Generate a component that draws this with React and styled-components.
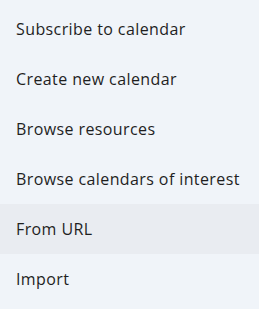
import React from "react";
import styled, { createGlobalStyle } from "styled-components";

const GlobalStyle = createGlobalStyle`
    body {
        margin: 0;
        background: #f0f4f9;
        font-family: "Open Sans", Roboto, sans-serif;
    }
`;

const Menu = styled.ul`
    list-style: none;
    margin: 0;
    padding: 4px 0 5px;
    width: 259px;
    height: 309px;
    box-sizing: border-box;
    background: #f0f4f9;
`;

const Item = styled.li`
    height: 50px;
    display: flex;
    align-items: center;
    padding: 0 16px;
    font-size: 16px;
    color: #1f1f1f;
    letter-spacing: 0.4px;
    background: ${({ $active }) => ($active ? "#e9ecf1" : "transparent")};
`;

const items = [
    "Subscribe to calendar",
    "Create new calendar",
    "Browse resources",
    "Browse calendars of interest",
    "From URL",
    "Import",
];

const App = () => (
    <>
        <GlobalStyle />
        <Menu>
            {items.map((label) => (
                <Item key={label} $active={label === "From URL"}>
                    {label}
                </Item>
            ))}
        </Menu>
    </>
);

export default App;
